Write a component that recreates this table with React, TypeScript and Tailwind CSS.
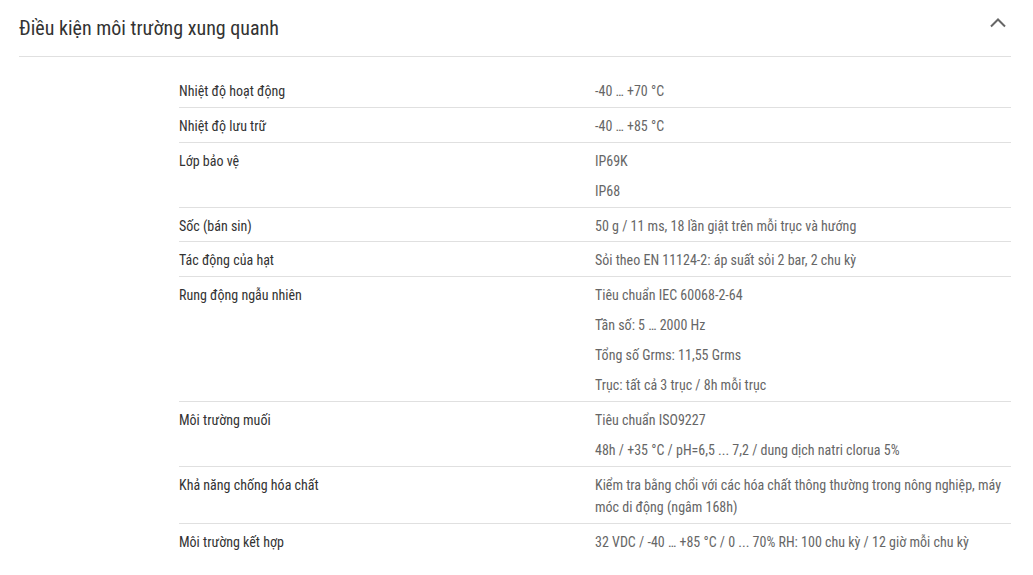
import React from "react";

const rows: { label: string; values: string[] }[] = [
  { label: "Nhiệt độ hoạt động", values: ["-40 … +70 °C"] },
  { label: "Nhiệt độ lưu trữ", values: ["-40 … +85 °C"] },
  { label: "Lớp bảo vệ", values: ["IP69K", "IP68"] },
  { label: "Sốc (bán sin)", values: ["50 g / 11 ms, 18 lần giật trên mỗi trục và hướng"] },
  { label: "Tác động của hạt", values: ["Sỏi theo EN 11124-2: áp suất sỏi 2 bar, 2 chu kỳ"] },
  {
    label: "Rung động ngẫu nhiên",
    values: ["Tiêu chuẩn IEC 60068-2-64", "Tần số: 5 … 2000 Hz", "Tổng số Grms: 11,55 Grms", "Trục: tất cả 3 trục / 8h mỗi trục"],
  },
  { label: "Môi trường muối", values: ["Tiêu chuẩn ISO9227", "48h / +35 °C / pH=6,5 ... 7,2 / dung dịch natri clorua 5%"] },
  {
    label: "Khả năng chống hóa chất",
    values: ["Kiểm tra bằng chổi với các hóa chất thông thường trong nông nghiệp, máy móc di động (ngâm 168h)"],
  },
  { label: "Môi trường kết hợp", values: ["32 VDC / -40 … +85 °C / 0 ... 70% RH: 100 chu kỳ / 12 giờ mỗi chu kỳ"] },
];

export default function App() {
  return (
    <div
      className="w-[1033px] h-[575px] bg-white pl-[19px] pr-[22px] overflow-hidden"
      style={{ fontFamily: "Roboto, 'Noto Sans', sans-serif", fontStretch: "75%" }}
    >
      <div className="h-[57px] flex items-center justify-between border-b border-[#e0e0e0]">
        <h2 className="text-[20px] text-[#333] leading-none -mt-[1px]">Điều kiện môi trường xung quanh</h2>
        <svg width="18" height="12" viewBox="0 0 18 12" className="mr-[4px] -mt-[10px]">
          <path d="M2 9.5 L9 2.5 L16 9.5" fill="none" stroke="#666" strokeWidth="2" />
        </svg>
      </div>
      <div className="ml-[160px] mt-[16px] text-[14px] leading-[22px]">
        {rows.map((r, i) => (
          <div key={i} className={`grid grid-cols-2 pt-[7px] pb-[4.85px] ${i > 0 ? "border-t border-[#e0e0e0]" : ""}`}>
            <div className="text-[#333]">{r.label}</div>
            <div className="flex flex-col gap-[8px] text-[#666]">
              {r.values.map((v, j) => (
                <p key={j}>{v}</p>
              ))}
            </div>
          </div>
        ))}
      </div>
    </div>
  );
}
